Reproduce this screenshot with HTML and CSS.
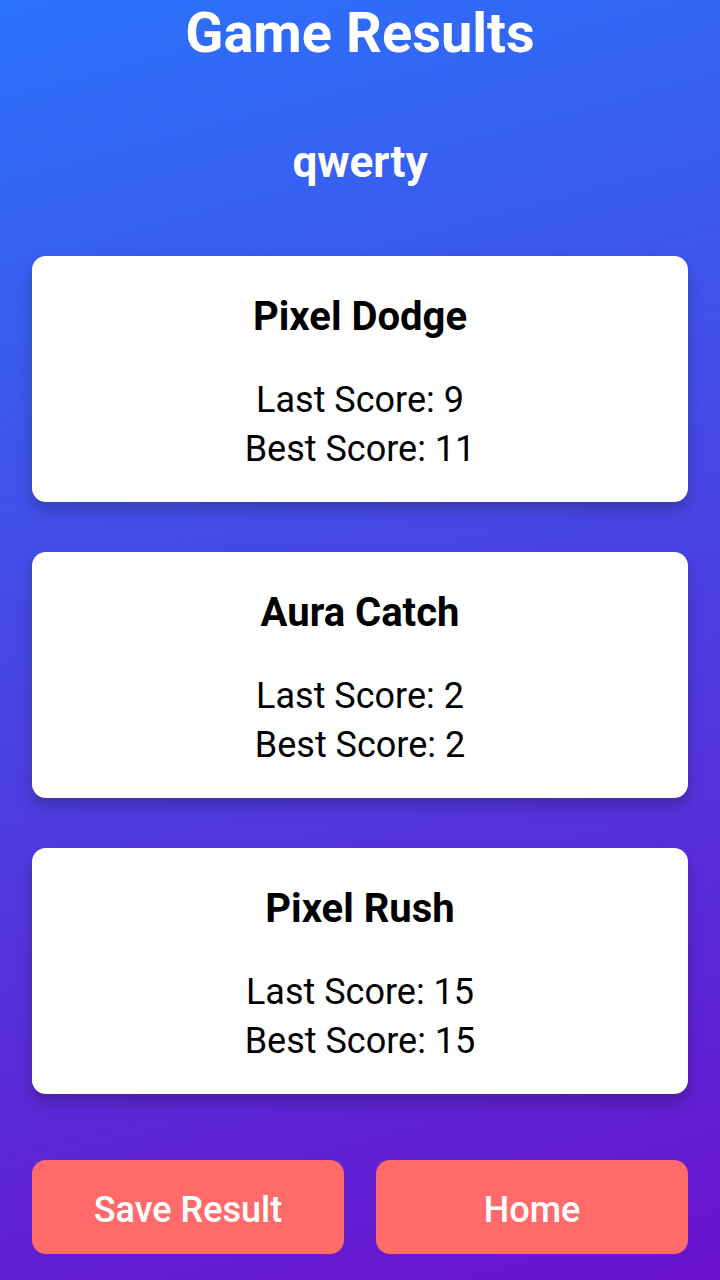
FILE: index.html
```html
<!DOCTYPE html>
<html lang="en">
<head>
  <meta charset="UTF-8">
  <title>Game Results</title>
  <link rel="stylesheet" href="styles.css">
</head>
<body>

  <h1>Game Results</h1>

  <div class="player">qwerty</div>

  <div class="results">
    <div class="card">
      <h2>Pixel Dodge</h2>
      <p>Last Score: 9<br>Best Score: 11</p>
    </div>
    <div class="card">
      <h2>Aura Catch</h2>
      <p>Last Score: 2<br>Best Score: 2</p>
    </div>
    <div class="card">
      <h2>Pixel Rush</h2>
      <p>Last Score: 15<br>Best Score: 15</p>
    </div>
  </div>

  <div class="actions">
    <button>Save Result</button>
    <button>Home</button>
  </div>

</body>
</html>
```

FILE: styles.css
```css
html {
  height: 100%;
}

body {
  margin: 0;
  min-height: 100%;
  font-family: Roboto, 'Noto Sans', sans-serif;
  background: linear-gradient(165deg, #2b72fb, #6a12cc);
  color: white;
  text-align: center;
  padding: 0 32px;
  box-sizing: border-box;
}

h1 {
  font-size: 56px;
  font-weight: 700;
  margin: 0;
  line-height: 66px;
}

.player {
  font-size: 44px;
  font-weight: 700;
  line-height: 49px;
  margin-top: 72px;
}

.results {
  display: flex;
  flex-direction: column;
  gap: 50px;
  margin-top: 69px;
}

.card {
  background: white;
  color: black;
  border-radius: 14px;
  height: 246px;
  box-sizing: border-box;
  padding-top: 37px;
  box-shadow: 0 8px 16px rgba(0, 0, 0, 0.22);
}

.card h2 {
  font-size: 40px;
  font-weight: 700;
  line-height: 47px;
  margin: 0;
}

.card p {
  font-size: 36px;
  font-weight: 400;
  line-height: 49px;
  margin: 36px 0 0;
}

.actions {
  display: flex;
  gap: 32px;
  margin-top: 66px;
}

button {
  flex: 1;
  height: 94px;
  padding-top: 6px;
  font-family: Roboto, 'Noto Sans', sans-serif;
  font-size: 36px;
  font-weight: 500;
  background-color: #ff6b6b;
  color: white;
  border: none;
  border-radius: 14px;
  cursor: pointer;
}
```
